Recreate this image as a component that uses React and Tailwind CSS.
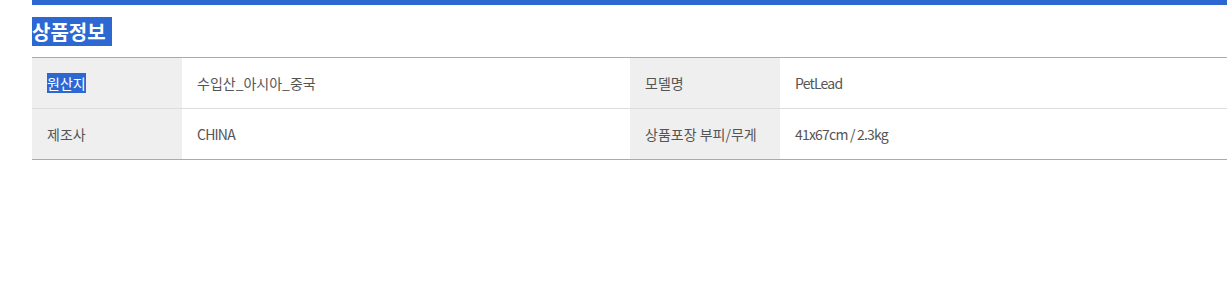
const rows = [
  [
    { label: '원산지', value: '수입산_아시아_중국', picked: true },
    { label: '모델명', value: 'PetLead', latin: true },
  ],
  [
    { label: '제조사', value: 'CHINA', latin: true },
    { label: '상품포장 부피/무게', value: '41x67cm / 2.3kg', latin: true },
  ],
];

const App = () => {
  return (
    <div className="min-h-screen bg-white font-['Noto_Sans_CJK_KR','Noto_Sans',sans-serif]">
      <div className="ml-8">
        {/* top accent bar */}
        <div className="h-[5px] bg-[#2c67d2]" />

        <h2 className="mt-3 text-[20px] font-bold leading-normal text-white">
          <span className="bg-[#2c67d2] pr-[6px]">상품정보</span>
        </h2>

        <table className="mt-[10px] w-full border-collapse border-t border-b border-[#aaaaaa] text-[14px] text-[#555]">
          <colgroup>
            <col className="w-[150px]" />
            <col className="w-[448px]" />
            <col className="w-[150px]" />
            <col />
          </colgroup>
          <tbody>
            {rows.map((row, i) => (
              <tr key={i} className={i < rows.length - 1 ? 'border-b border-[#dddddd]' : ''}>
                {row.map((cell) => (
                  <>
                    <th
                      key={cell.label}
                      className="h-[51px] bg-[#efefef] px-[15px] text-left font-normal"
                    >
                      {cell.picked ? (
                        <span className="bg-[#2c67d2] text-white">{cell.label}</span>
                      ) : (
                        cell.label
                      )}
                    </th>
                    <td
                      key={cell.value}
                      className={`h-[51px] px-[15px] ${cell.latin ? 'tracking-[-0.8px]' : ''}`}
                    >
                      {cell.value}
                    </td>
                  </>
                ))}
              </tr>
            ))}
          </tbody>
        </table>
      </div>
    </div>
  );
};

export default App;
